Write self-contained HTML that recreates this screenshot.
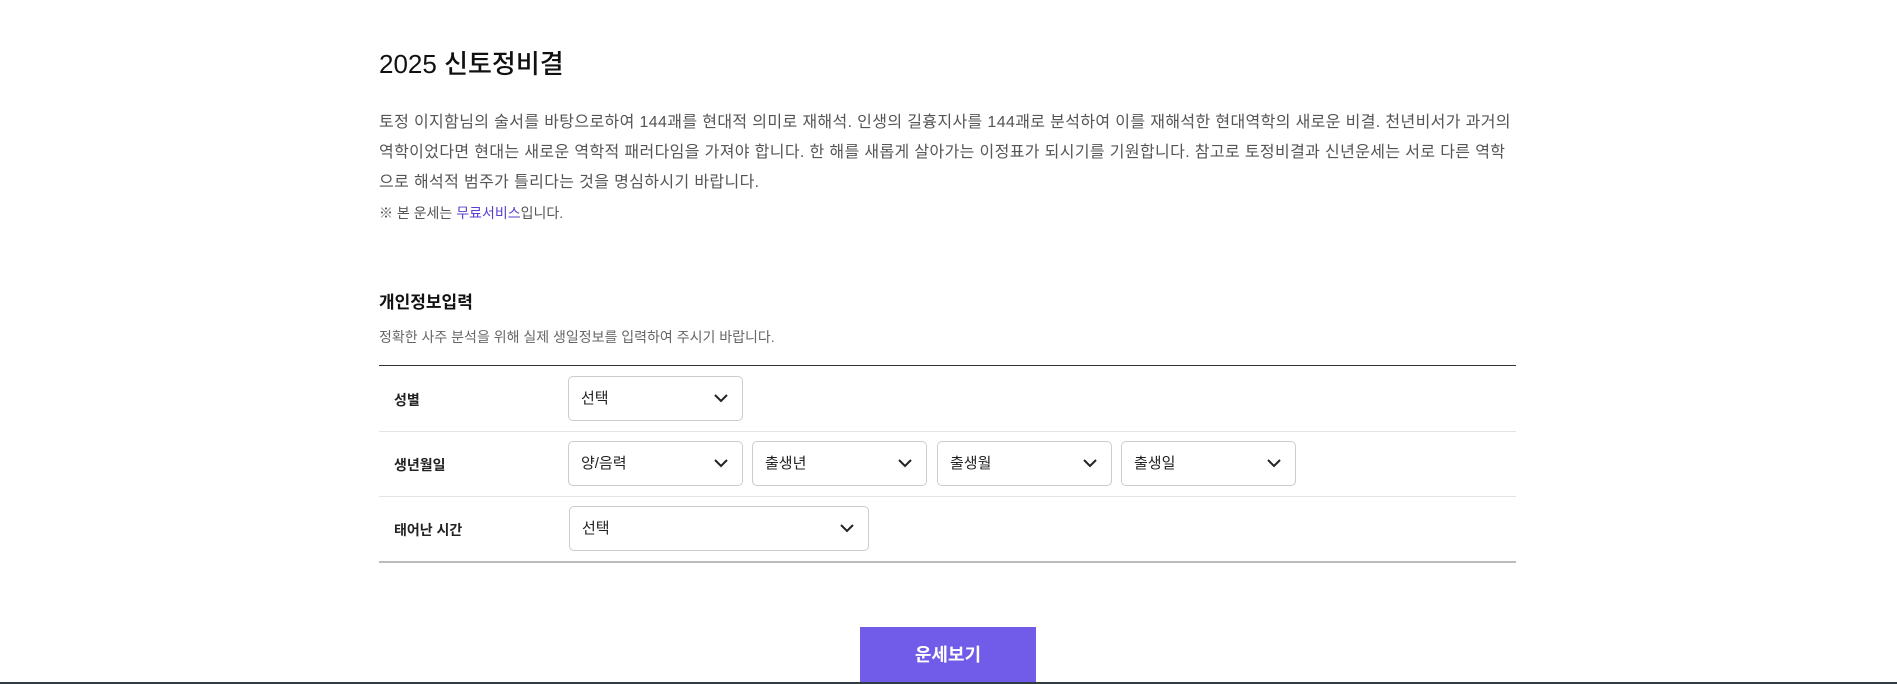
<!DOCTYPE html>
<html><head><meta charset="utf-8"><style>
*{margin:0;padding:0;box-sizing:border-box}
body{width:1897px;height:684px;background:#fff;position:relative;overflow:hidden;font-family:"Liberation Sans","Noto Sans CJK KR",sans-serif;color:#222}
.a{position:absolute}
h1{position:absolute;left:379px;top:44px;font-size:26px;font-weight:500;color:#111}
.p{left:379px;top:108px;font-size:16px;line-height:30px;color:#555;letter-spacing:0.36px;white-space:nowrap}
.note{left:379px;top:203px;font-size:14px;color:#555}
.note span{color:#5a3fd0}
.h2{left:379px;top:288px;font-size:17px;font-weight:700;color:#111}
.sub{left:379px;top:327px;font-size:14px;color:#666}
.line{left:379px;width:1137px;height:1px;background:#e4e4e4}
.lab{left:394px;font-size:14px;font-weight:700;color:#222}
.sel{height:45px;border:1px solid #ccc;border-radius:5px;font-size:15px;padding:0 12px;line-height:43px;color:#222}
.sel svg{position:absolute;right:14px;top:16px}
.btn{left:860px;top:627px;width:176px;height:57px;background:#705ce8;color:#fff;font-size:18px;font-weight:700;text-align:center;line-height:57px}
</style></head><body>
<h1>2025 신토정비결</h1>
<div class="a p">토정 이지함님의 술서를 바탕으로하여 144괘를 현대적 의미로 재해석. 인생의 길흉지사를 144괘로 분석하여 이를 재해석한 현대역학의 새로운 비결. 천년비서가 과거의<br>역학이었다면 현대는 새로운 역학적 패러다임을 가져야 합니다. 한 해를 새롭게 살아가는 이정표가 되시기를 기원합니다. 참고로 토정비결과 신년운세는 서로 다른 역학<br>으로 해석적 범주가 틀리다는 것을 명심하시기 바랍니다.</div>
<div class="a note">※ 본 운세는 <span>무료서비스</span>입니다.</div>
<div class="a h2">개인정보입력</div>
<div class="a sub">정확한 사주 분석을 위해 실제 생일정보를 입력하여 주시기 바랍니다.</div>
<div class="a line" style="top:365px;background:#333"></div>
<div class="a line" style="top:431px"></div>
<div class="a line" style="top:496px"></div>
<div class="a line" style="top:561px;height:2px;background:#bbb"></div>
<div class="a lab" style="top:390px">성별</div>
<div class="a lab" style="top:455px">생년월일</div>
<div class="a lab" style="top:520px">태어난 시간</div>
<div class="a sel" style="left:568px;top:376px;width:175px">선택<svg width="14" height="10"><path d="M1 2l6 6 6-6" fill="none" stroke="#222" stroke-width="2"/></svg></div>
<div class="a sel" style="left:568px;top:441px;width:175px">양/음력<svg width="14" height="10"><path d="M1 2l6 6 6-6" fill="none" stroke="#222" stroke-width="2"/></svg></div>
<div class="a sel" style="left:752px;top:441px;width:175px">출생년<svg width="14" height="10"><path d="M1 2l6 6 6-6" fill="none" stroke="#222" stroke-width="2"/></svg></div>
<div class="a sel" style="left:937px;top:441px;width:175px">출생월<svg width="14" height="10"><path d="M1 2l6 6 6-6" fill="none" stroke="#222" stroke-width="2"/></svg></div>
<div class="a sel" style="left:1121px;top:441px;width:175px">출생일<svg width="14" height="10"><path d="M1 2l6 6 6-6" fill="none" stroke="#222" stroke-width="2"/></svg></div>
<div class="a sel" style="left:569px;top:506px;width:300px">선택<svg width="14" height="10"><path d="M1 2l6 6 6-6" fill="none" stroke="#222" stroke-width="2"/></svg></div>
<div class="a btn">운세보기</div>
<div class="a" style="left:0;top:682px;width:1897px;height:2px;background:#2f3b45"></div>
</body></html>
